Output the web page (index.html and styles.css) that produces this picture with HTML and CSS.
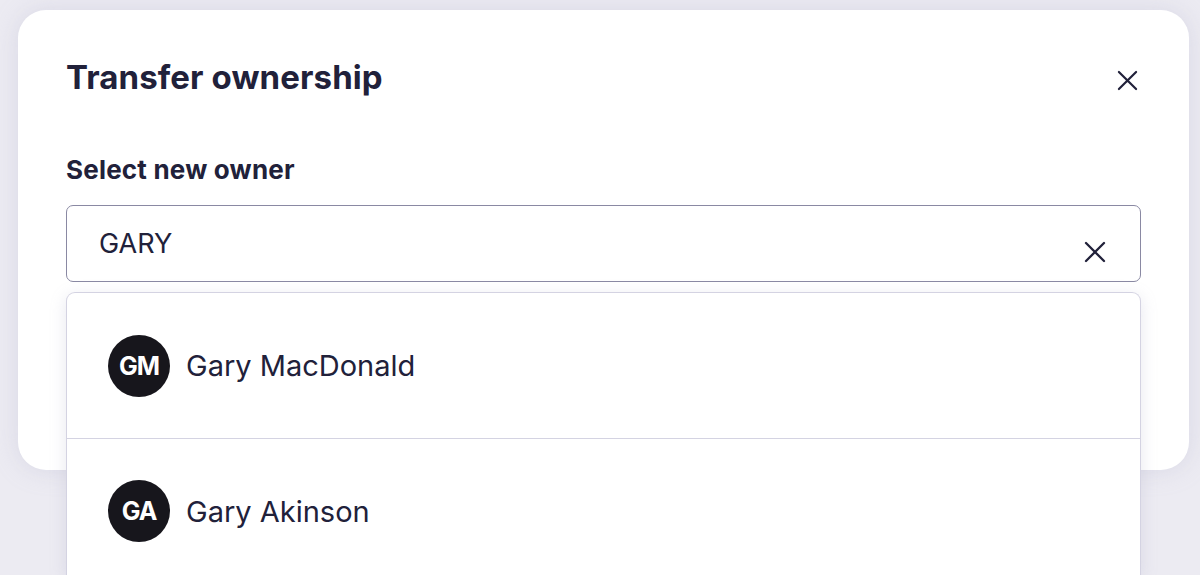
FILE: index.html
```html
<!DOCTYPE html>
<html>
<head>
<meta charset="utf-8">
<link rel="stylesheet" href="styles.css">
</head>
<body>
<div class="modal">
  <div class="header">
    <h1 class="title">Transfer ownership</h1>
    <button class="close" aria-label="Close">
      <svg width="21" height="21" viewBox="0 0 22 22"><path d="M2 2L20 20M20 2L2 20" stroke="#21213a" stroke-width="2.3" stroke-linecap="round"/></svg>
    </button>
  </div>
  <label class="label">Select new owner</label>
  <div class="field">
    <div class="input">
      <span class="value">GARY</span>
      <svg class="clear" width="22" height="22" viewBox="0 0 22 22"><path d="M2 2L20 20M20 2L2 20" stroke="#21213a" stroke-width="2.3" stroke-linecap="round"/></svg>
    </div>
    <div class="menu">
      <div class="option">
        <span class="avatar">GM</span>
        <span class="name">Gary MacDonald</span>
      </div>
      <div class="option">
        <span class="avatar">GA</span>
        <span class="name">Gary Akinson</span>
      </div>
    </div>
  </div>
</div>
</body>
</html>
```
FILE: styles.css
```css
html, body {
  margin: 0;
  padding: 0;
  height: 100%;
  overflow: hidden;
}
body {
  background: #ecebf2;
  font-family: Inter, "Noto Sans", sans-serif;
  color: #21213a;
  padding: 10px 11px 0 18px;
  box-sizing: border-box;
}
.modal {
  background: #ffffff;
  border-radius: 28px;
  height: 460px;
  box-sizing: border-box;
  padding: 43px 48px 0 48px;
  box-shadow: 0 0 24px rgba(180, 180, 205, 0.35);
}
.header {
  display: flex;
  align-items: center;
  justify-content: space-between;
}
.title {
  margin: 0;
  font-size: 33px;
  line-height: 48px;
  font-weight: 700;
  letter-spacing: 0.1px;
}
.close {
  background: none;
  border: 0;
  padding: 0;
  width: 21px;
  height: 21px;
  margin-right: 3px;
  margin-top: 6px;
  display: flex;
}
.label {
  display: block;
  margin-top: 54px;
  font-size: 26px;
  line-height: 30px;
  font-weight: 700;
  letter-spacing: 0.2px;
}
.field {
  position: relative;
  margin-top: 20px;
  width: 1075px;
}
.input {
  height: 77px;
  box-sizing: border-box;
  border: 1.5px solid #8a89a3;
  border-radius: 7px;
  display: flex;
  align-items: center;
  padding: 0 34px 0 32px;
  justify-content: space-between;
}
.value {
  font-size: 27px;
}
.clear {
  margin-top: 17px;
}
.menu {
  position: absolute;
  left: 0;
  right: 0;
  top: 87px;
  height: 283px;
  box-sizing: border-box;
  background: #ffffff;
  border: 1.5px solid #d4d3e2;
  border-bottom: 0;
  border-radius: 9px 9px 0 0;
  box-shadow: 0 4px 16px rgba(160, 160, 190, 0.25);
}
.option {
  height: 145px;
  display: flex;
  align-items: center;
  padding-left: 41px;
  gap: 16px;
  box-sizing: border-box;
}
.option + .option {
  border-top: 1.5px solid #d4d3e2;
}
.avatar {
  width: 62px;
  height: 62px;
  border-radius: 50%;
  background: #17161c;
  color: #ffffff;
  font-weight: 700;
  font-size: 25px;
  display: flex;
  align-items: center;
  justify-content: center;
  letter-spacing: -1px;
}
.name {
  font-size: 29px;
  font-weight: 400;
}
```
